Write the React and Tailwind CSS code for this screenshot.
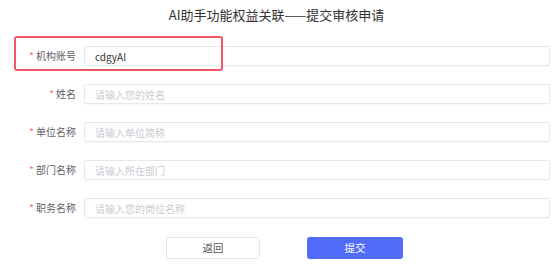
import { useState } from 'react'

const fields = [
  { label: '机构账号', name: 'account', placeholder: '', value: 'cdgyAI' },
  { label: '姓名', name: 'name', placeholder: '请输入您的姓名' },
  { label: '单位名称', name: 'org', placeholder: '请输入单位简称' },
  { label: '部门名称', name: 'dept', placeholder: '请输入所在部门' },
  { label: '职务名称', name: 'post', placeholder: '请输入您的岗位名称' },
]

const App = () => {
  const [form, setForm] = useState({ account: 'cdgyAI', name: '', org: '', dept: '', post: '' })

  return (
    <main
      className="relative w-[553px] h-[275px] bg-white overflow-hidden"
      style={{ fontFamily: '"Noto Sans CJK SC", "Noto Sans", sans-serif' }}
    >
      <h3 className="pt-[6px] text-center text-[13px] leading-[18px] text-[#333]">
        AI助手功能权益关联——提交审核申请
      </h3>

      <form className="mt-[22px] flex flex-col gap-[18px]" onSubmit={(e) => e.preventDefault()}>
        {fields.map((f) => (
          <div key={f.name} className="flex items-center h-[20px]">
            <label className="w-[76px] text-right text-[10px] text-[#5f6266] leading-none">
              <span className="text-[#f56c6c] mr-[2px]">*</span>
              {f.label}
            </label>
            <input
              type="text"
              name={f.name}
              value={form[f.name]}
              placeholder={f.placeholder}
              onChange={(e) => setForm({ ...form, [f.name]: e.target.value })}
              className="ml-[8px] w-[466px] h-[20px] px-[10px] text-[10px] text-[#333] placeholder:text-[#c8cbd1] border border-[#e6e8eb] rounded-[2px] shadow-[0_1px_1px_rgba(0,0,0,0.03)] outline-none"
            />
          </div>
        ))}

        <div className="flex items-center gap-[47px] pl-[166px] mt-[1px]">
          <button
            type="button"
            className="w-[94px] h-[22px] text-[10.5px] text-[#555] bg-white border border-[#e4e6ea] rounded-[3px]"
          >
            返回
          </button>
          <button
            type="submit"
            className="w-[96px] h-[22px] text-[10.5px] text-white bg-[#4f6cfb] rounded-[3px]"
          >
            提交
          </button>
        </div>
      </form>

      {/* highlight annotation */}
      <div className="absolute left-[14px] top-[36px] w-[209px] h-[35px] border-2 border-[#f0576b] rounded-[3px] pointer-events-none" />
    </main>
  )
}

export default App
